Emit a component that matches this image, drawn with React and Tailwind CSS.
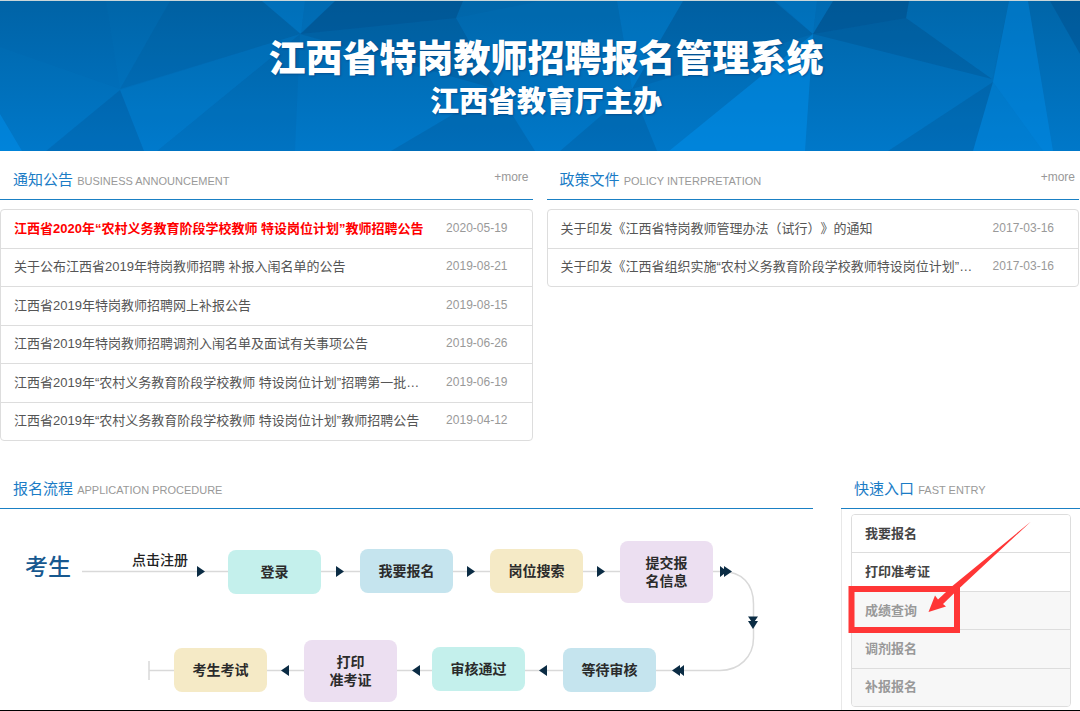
const NOTICES = [
  { title: "江西省2020年“农村义务教育阶段学校教师 特设岗位计划”教师招聘公告", date: "2020-05-19", hot: true },
  { title: "关于公布江西省2019年特岗教师招聘 补报入闱名单的公告", date: "2019-08-21" },
  { title: "江西省2019年特岗教师招聘网上补报公告", date: "2019-08-15" },
  { title: "江西省2019年特岗教师招聘调剂入闱名单及面试有关事项公告", date: "2019-06-26" },
  { title: "江西省2019年“农村义务教育阶段学校教师 特设岗位计划”招聘第一批…", date: "2019-06-19" },
  { title: "江西省2019年“农村义务教育阶段学校教师 特设岗位计划”教师招聘公告", date: "2019-04-12" },
];

const POLICIES = [
  { title: "关于印发《江西省特岗教师管理办法（试行）》的通知", date: "2017-03-16" },
  { title: "关于印发《江西省组织实施“农村义务教育阶段学校教师特设岗位计划”…", date: "2017-03-16" },
];

const ENTRIES = [
  { label: "我要报名", open: true },
  { label: "打印准考证", open: true },
  { label: "成绩查询", open: false },
  { label: "调剂报名", open: false },
  { label: "补报报名", open: false },
];

// node positions on the flow canvas
const STEPS = [
  { lines: ["登录"], pos: "left-[228px] top-[41px] h-11 bg-[#c4f0ec]" },
  { lines: ["我要报名"], pos: "left-[360px] top-[40px] h-11 bg-[#c5e4ee]" },
  { lines: ["岗位搜索"], pos: "left-[490px] top-[40px] h-11 bg-[#f5eac6]" },
  { lines: ["提交报", "名信息"], pos: "left-[620px] top-[32px] h-[62px] bg-[#ecdff1]" },
  { lines: ["等待审核"], pos: "left-[563px] top-[139px] h-11 bg-[#c5e4ee]" },
  { lines: ["审核通过"], pos: "left-[432px] top-[138px] h-11 bg-[#c4f0ec]" },
  { lines: ["打印", "准考证"], pos: "left-[304px] top-[131px] h-[62px] bg-[#ecdff1]" },
  { lines: ["考生考试"], pos: "left-[174px] top-[139px] h-11 bg-[#f5eac6]" },
];

const Banner = () => (
  <header className="relative h-[151px] overflow-hidden border-t border-[#c9d6d9] text-center text-white">
    <svg className="absolute inset-0 h-full w-full" viewBox="0 0 1080 150" preserveAspectRatio="none" aria-hidden="true">
      <defs>
        <linearGradient id="sky" x1="0" y1="0" x2="0" y2="1">
          <stop offset="0" stopColor="#0065a8" />
          <stop offset="1" stopColor="#0078c9" />
        </linearGradient>
      </defs>
      <rect width="1080" height="150" fill="url(#sky)" />
      <g fill="#003b70">
        <polygon opacity=".1" points="170,0 262,0 300,33 120,88" />
        <polygon opacity=".03" points="0,46 120,88 106,0 0,0" />
        <polygon opacity=".16" points="120,89 46,150 144,150" />
        <polygon opacity=".08" points="300,33 157,150 295,150" />
        <polygon opacity=".32" points="335,0 463,0 456,17 300,33" />
        <polygon opacity=".18" points="300,33 456,17 496,88" />
        <polygon opacity=".18" points="391,150 496,88 535,150" />
        <polygon opacity=".12" points="683,0 776,0 813,33 632,88" />
        <polygon opacity=".18" points="560,150 632,88 657,150" />
        <polygon opacity=".32" points="833,0 909,0 906,17 813,33" />
        <polygon opacity=".2" points="813,33 906,17 992,78" />
        <polygon opacity=".18" points="888,150 993,81 973,150" />
        <polygon opacity=".26" points="1050,0 1080,0 1080,53" />
      </g>
      <g fill="#0096f5">
        <polygon opacity=".4" points="0,113 22,150 0,150" />
        <polygon opacity=".08" points="120,89 300,33 157,150 144,150" />
        <polygon opacity=".22" points="262,0 305,0 301,33" />
        <polygon opacity=".12" points="305,0 335,0 301,33" />
        <polygon opacity=".06" points="456,17 540,0 617,0 632,88 496,88" />
        <polygon opacity=".22" points="617,0 683,0 632,88" />
        <polygon opacity=".42" points="669,150 813,33 805,150" />
        <polygon opacity=".22" points="774,0 817,0 813,33" />
        <polygon opacity=".12" points="817,0 833,0 813,33" />
        <polygon opacity=".05" points="909,0 1009,0 992,78 906,17" />
        <polygon opacity=".34" points="1009,0 1028,0 1053,150 1043,150 993,81" />
        <polygon opacity=".24" points="993,81 1043,150 973,150" />
      </g>
    </svg>
    <div className="relative pt-[35px] pl-3 [text-shadow:1px_1px_2px_rgba(0,50,110,0.5)]">
      <h1 className="text-[37px] leading-[48px] font-black">江西省特岗教师招聘报名管理系统</h1>
      <p className="text-[29px] leading-9 font-black">江西省教育厅主办</p>
    </div>
  </header>
);

const SectionHead = ({ title, en, more }) => (
  <div className="flex h-12 items-center justify-between border-b border-[#1a80c4] pt-[10px] pr-1 pl-[13px]">
    <h2 className="text-[15px] leading-6 text-[#1a7cc6]">
      {title} <span className="text-[11px] text-[#999]">{en}</span>
    </h2>
    {more && <a href="#" className="pb-2 text-xs text-[#999]">+more</a>}
  </div>
);

const NewsList = ({ items, height }) => (
  <ul className={`mt-[9px] flex flex-col divide-y divide-[#ddd] rounded border border-[#ddd] ${height}`}>
    {items.map((n) => (
      <li key={n.title} className="flex flex-1 items-center justify-between pr-6 pl-[13px]">
        <a href="#" className={`whitespace-nowrap text-[13px] leading-5 ${n.hot ? "font-bold text-[#f00]" : "text-[#555]"}`}>
          {n.title}
        </a>
        <span className="pb-0.5 text-xs text-[#999]">{n.date}</span>
      </li>
    ))}
  </ul>
);

const FlowChart = () => (
  <div className="relative h-[201px] w-full">
    <svg className="absolute top-0 left-0" width="813" height="201" viewBox="0 509 813 201" fill="none" aria-hidden="true">
      <g stroke="#d9d9d9" strokeWidth="1.5">
        <path d="M82 571.500H722C742 571.500 753.500 584 753.500 604V638C753.500 657 739 670.500 720 670.500H149" />
        <path d="M149 661V680" />
      </g>
      <g fill="#0b2c44">
        <path d="M197 566l8 5.500-8 5.500zM336 566l8 5.500-8 5.500zM467 566l8 5.500-8 5.500zM597 566l8 5.500-8 5.500z" />
        <path d="M720 566l7 5.500-7 5.500zM724 566l8 5.500-8 5.500z" />
        <path d="M748 616.500h10l-5 7zM748 621h10l-5 8z" />
        <path d="M684 665v11l-7-5.500zM680 665v11l-8-5.500zM547 665v11l-8-5.500zM420 665v11l-8-5.500zM289 665v11l-8-5.500z" />
      </g>
    </svg>
    <span className="absolute top-[42px] left-[25px] text-[23px] leading-8 font-medium text-[#17588f]">考生</span>
    <span className="absolute top-[41px] left-[132px] text-sm font-medium text-[#222]">点击注册</span>
    {STEPS.map((s) => (
      <div
        key={s.lines.join("")}
        className={`absolute flex w-[93px] flex-col items-center justify-center rounded-lg text-sm leading-[18px] font-bold text-[#2b2b2b] ${s.pos}`}
      >
        {s.lines.map((l) => <span key={l}>{l}</span>)}
      </div>
    ))}
  </div>
);

const QuickEntry = () => (
  <div className="border-l border-[#e8e8e8] px-[9px] pt-[5px] pb-[3px]">
    <div className="relative">
      <ul className="flex min-h-[193px] flex-col divide-y divide-[#ddd] overflow-hidden rounded border border-[#ddd]">
        {ENTRIES.map((e) => (
          <li key={e.label} className="flex flex-1">
            <button
              type="button"
              disabled={!e.open}
              className="w-full bg-white pl-[13px] text-left text-[13px] leading-5 font-bold text-[#444] disabled:bg-[#f7f7f7] disabled:text-[#999]"
            >
              {e.label}
            </button>
          </li>
        ))}
      </ul>
      {/* Highlight on score query */}
      <svg className="pointer-events-none absolute top-0 -left-[3px]" width="190" height="125" viewBox="848 514 190 125" aria-hidden="true">
        <rect x="851.500" y="589" width="105.500" height="41" fill="none" stroke="#ff3636" strokeWidth="6" />
        <path d="M928.500 612L935 595.500L938 599.500L953 585.500L1031 521.500L958 589.500L943 604L946 606.500Z" fill="#ff3636" />
      </svg>
    </div>
  </div>
);

export default function App() {
  return (
    <div className="border-b border-black bg-white font-['Liberation_Sans','Noto_Sans_CJK_SC',sans-serif] [text-spacing-trim:space-all]">
      <Banner />

      <main>
        <div className="grid grid-cols-2 gap-[14px] pr-px">
          <section className="pt-px">
            <SectionHead title="通知公告" en="BUSINESS ANNOUNCEMENT" more />
            <NewsList items={NOTICES} height="min-h-[232px]" />
          </section>
          <section className="pt-px">
            <SectionHead title="政策文件" en="POLICY INTERPRETATION" more />
            <NewsList items={POLICIES} height="min-h-[78px]" />
          </section>
        </div>

        <div className="mt-5 flex gap-7">
          <section className="flex-1">
            <SectionHead title="报名流程" en="APPLICATION PROCEDURE" />
            <FlowChart />
          </section>
          <section className="w-[239px]">
            <SectionHead title="快速入口" en="FAST ENTRY" />
            <QuickEntry />
          </section>
        </div>
      </main>
    </div>
  );
}
